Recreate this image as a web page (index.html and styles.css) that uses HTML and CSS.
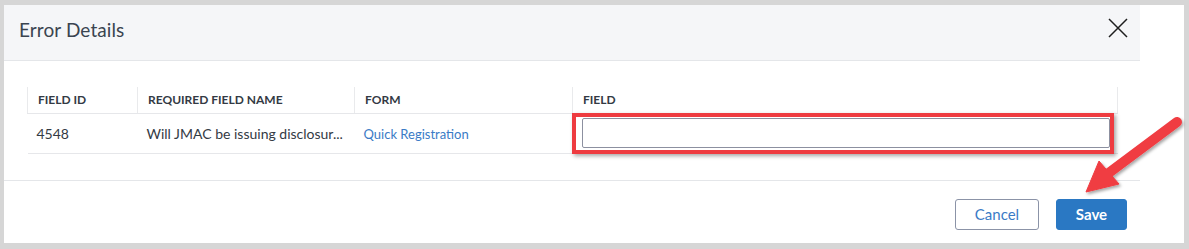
FILE: index.html
```html
<!DOCTYPE html>
<html lang="en">
<head>
<meta charset="utf-8">
<title>Error Details</title>
<link rel="stylesheet" href="styles.css">
</head>
<body>
<div class="frame">
  <div class="modal">
    <div class="modal-header">
      <h1 class="modal-title">Error Details</h1>
      <button class="close-btn" aria-label="Close">
        <svg width="20" height="20" viewBox="0 0 20 20"><path d="M1 1 L19 19 M19 1 L1 19" stroke="#1e1e1e" stroke-width="1.5" fill="none"/></svg>
      </button>
    </div>
    <div class="modal-body">
      <table class="grid">
        <colgroup>
          <col class="c-id"><col class="c-name"><col class="c-form"><col class="c-field">
        </colgroup>
        <thead>
          <tr><th>FIELD ID</th><th>REQUIRED FIELD NAME</th><th>FORM</th><th>FIELD</th></tr>
        </thead>
        <tbody>
          <tr>
            <td>4548</td>
            <td class="name">Will JMAC be issuing disclosur...</td>
            <td><a class="form-link" href="#">Quick Registration</a></td>
            <td class="field-cell"><input class="field-input" type="text"><span class="highlight"></span></td>
          </tr>
        </tbody>
      </table>
    </div>
    <div class="modal-footer">
      <button class="btn btn-cancel">Cancel</button>
      <button class="btn btn-save">Save</button>
    </div>
  </div>
  <svg class="arrow" width="119" height="100" viewBox="1070 105 119 100">
    <defs>
      <filter id="sh" x="-30%" y="-30%" width="160%" height="160%">
        <feDropShadow dx="1.5" dy="2" stdDeviation="1.5" flood-color="#000" flood-opacity="0.35"/>
      </filter>
    </defs>
    <g filter="url(#sh)" fill="#f03c42" stroke="#f03c42">
      <line x1="1177" y1="122" x2="1106" y2="175" stroke-width="10" stroke-linecap="round"/>
      <polygon points="1086,192 1099,161 1119,184" stroke-width="1" stroke-linejoin="round"/>
    </g>
  </svg>
</div>
</body>
</html>
```
FILE: styles.css
```css
html, body {
  margin: 0;
  padding: 0;
  background: #ffffff;
}
body {
  font-family: Lato, "Open Sans", Arial, sans-serif;
  color: #333;
}
.frame {
  position: relative;
  box-sizing: border-box;
  width: 1189px;
  height: 249px;
  border-style: solid;
  border-color: #d6d6d6;
  border-width: 5px 5px 6px 4px;
  background: #fff;
}
.modal {
  width: 1136px;
  background: #fff;
}
.modal-header {
  box-sizing: border-box;
  height: 56px;
  background: #f5f6f8;
  border-bottom: 1px solid #e4e6e9;
  display: flex;
  align-items: center;
  justify-content: space-between;
  padding: 0 12px 0 15px;
}
.modal-title {
  margin: 0 0 6px 0;
  font-size: 19px;
  font-weight: 400;
  color: #3a4450;
  letter-spacing: 0.1px;
}
.close-btn {
  background: none;
  border: 0;
  padding: 0;
  width: 20px;
  height: 20px;
  display: flex;
  margin-bottom: 10px;
}
.modal-body {
  padding: 26px 23px 26px 23px;
}
.grid {
  width: 1090px;
  table-layout: fixed;
  border-collapse: collapse;
}
.c-id { width: 110px; }
.c-name { width: 217px; }
.c-form { width: 218px; }
.c-field { width: 545px; }
.grid th {
  height: 26px;
  box-sizing: border-box;
  padding: 0 10px;
  text-align: left;
  font-size: 12px;
  font-weight: 700;
  color: #333a44;
  border-left: 1px solid #e9eaec;
  border-bottom: 1px solid #e6e7ea;
  vertical-align: middle;
}
.grid th:last-child {
  border-right: 1px solid #e9eaec;
}
.grid td {
  height: 40px;
  box-sizing: border-box;
  padding: 0 9px;
  font-size: 14px;
  color: #333a44;
  border-bottom: 1px solid #e6e7ea;
  white-space: nowrap;
  overflow: hidden;
  vertical-align: middle;
}
.grid td.name {
  padding-right: 2px;
  text-overflow: ellipsis;
}
.form-link {
  color: #3a7bc6;
  text-decoration: none;
  font-size: 13px;
}
.grid td.field-cell {
  position: relative;
  overflow: visible;
  padding: 0 8px 0 9px;
}
.field-input {
  display: block;
  box-sizing: border-box;
  width: 100%;
  height: 30px;
  border: 1px solid #8c90a0;
  border-radius: 2px;
  background: #fff;
  margin: 0;
}
.highlight {
  position: absolute;
  left: -1px;
  top: -1px;
  right: 4px;
  bottom: -1px;
  border: 4px solid #ee3b40;
  box-shadow: 2px 2px 4px rgba(0, 0, 0, 0.35);
  pointer-events: none;
}
.modal-footer {
  border-top: 1px solid #e4e6e9;
  display: flex;
  justify-content: flex-end;
  gap: 17px;
  padding: 18px 13px 12px 0;
}
.btn {
  box-sizing: border-box;
  height: 31px;
  border-radius: 3px;
  font-family: Lato, "Open Sans", Arial, sans-serif;
  font-size: 15px;
  padding: 0;
}
.btn-cancel {
  width: 84px;
  background: #fff;
  border: 1px solid #8b93a7;
  color: #3a7bc6;
}
.btn-save {
  width: 71px;
  background: #2a78c3;
  border: 1px solid #2a78c3;
  color: #fff;
  font-weight: 700;
}
.arrow {
  position: absolute;
  left: 1066px;
  top: 100px;
}
```
